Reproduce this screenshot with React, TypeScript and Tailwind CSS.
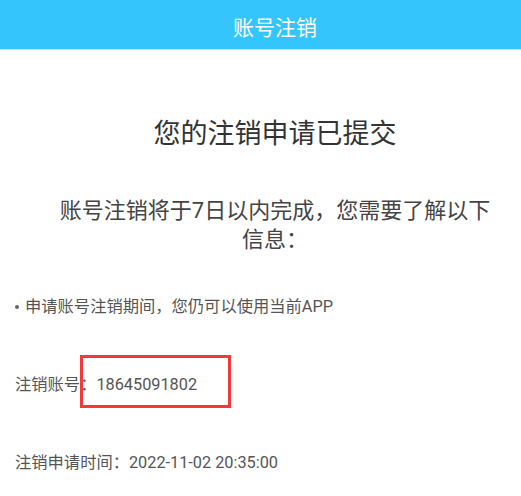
export default function App() {
  return (
    <div className="w-full h-[496px] overflow-hidden bg-white">
      <div
        className="relative w-[550px] text-[#555]"
        style={{ fontFamily: "Roboto, 'Noto Sans CJK SC', sans-serif" }}
      >
        {/* Title bar */}
        <header className="h-[50px] bg-[#33c5fb] border-b border-[#bfeafc] flex items-center justify-center">
          <h1 className="text-white text-[21px] leading-none pt-[7px]">账号注销</h1>
        </header>

        <main className="flex flex-col">
          <h2 className="mt-[67px] text-center text-[27px] leading-[35px] text-[#333]">
            您的注销申请已提交
          </h2>

          <p className="mt-[44px] mx-auto w-[440px] text-center text-[22px] leading-[29px] text-[#444]">
            账号注销将于7日以内完成，您需要了解以下信息：
          </p>

          <div className="mt-[41px] pl-[15px] flex items-center text-[16.3px] leading-[24px]">
            <span className="w-[4px] h-[4px] rounded-full bg-[#666] mr-[6px]" />
            <span>申请账号注销期间，您仍可以使用当前APP</span>
          </div>

          <div className="mt-[54px] pl-[15px] text-[16.3px] leading-[24px]">
            注销账号：18645091802
          </div>

          <div className="mt-[54px] pl-[15px] text-[16.3px] leading-[24px]">
            注销申请时间：2022-11-02 20:35:00
          </div>
        </main>

        {/* annotation box */}
        <div className="absolute left-[80px] top-[355px] w-[151px] h-[53px] border-[3px] border-[#f23a3a]" />
      </div>
    </div>
  );
}
